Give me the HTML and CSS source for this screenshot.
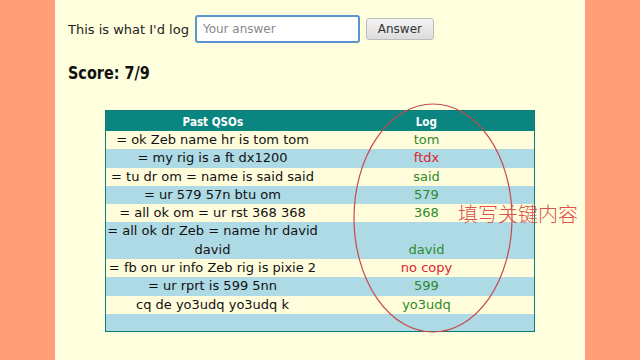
FILE: index.html
```html
<!DOCTYPE html>
<html lang="en">
<head>
    <meta charset="UTF-8">
    <meta name="viewport" content="width=device-width, initial-scale=1.0">
    <title>Copy practice</title>
    <link rel="stylesheet" href="styles.css">
</head>
<body>
    <div class="page">
        <form class="answer-row">
            <label for="answer">This is what I'd log</label>
            <input type="text" id="answer" name="answer" placeholder="Your answer">
            <button type="submit">Answer</button>
        </form>
        <h2 class="score"><span class="narrow">Score: 7/9</span></h2>
        <table class="qsos">
            <thead>
                <tr><th><span class="narrow">Past QSOs</span></th><th><span class="narrow">Log</span></th></tr>
            </thead>
            <tbody>
                <tr><td>= ok Zeb name hr is tom tom</td><td class="ok">tom</td></tr>
                <tr><td>= my rig is a ft dx1200</td><td class="bad">ftdx</td></tr>
                <tr><td>= tu dr om = name is said said</td><td class="ok">said</td></tr>
                <tr><td>= ur 579 57n btu om</td><td class="ok">579</td></tr>
                <tr><td>= all ok om = ur rst 368 368</td><td class="ok">368</td></tr>
                <tr><td>= all ok dr Zeb = name hr david david</td><td class="ok">david</td></tr>
                <tr><td>= fb on ur info Zeb rig is pixie 2</td><td class="bad">no copy</td></tr>
                <tr><td>= ur rprt is 599 5nn</td><td class="ok">599</td></tr>
                <tr><td>cq de yo3udq yo3udq k</td><td class="ok">yo3udq</td></tr>
                <tr class="empty"><td></td><td></td></tr>
            </tbody>
        </table>

        <!-- 标注 -->
        <svg class="mark" width="164" height="234" viewBox="0 0 164 234">
            <ellipse cx="82" cy="117" rx="79" ry="114" fill="none" stroke="#c8484c" stroke-width="1.2"/>
        </svg>
        <div class="note">填写关键内容</div>
    </div>
</body>
</html>
```

FILE: styles.css
```css
body {
    margin: 0;
    background-color: #FF9F7A;
    font-family: "DejaVu Sans", Verdana, sans-serif;
    font-size: 13px;
    color: #111;
}
.page {
    position: relative;
    width: 504px;
    min-height: 100vh;
    margin: 0 auto;
    padding: 15px 13px 0;
    background-color: #FFFFDD;
}
.answer-row {
    display: flex;
    align-items: center;
    gap: 6px;
    margin: 0;
}
.answer-row label {
    font-size: 13px;
    color: #222;
}
.answer-row input {
    box-sizing: border-box;
    width: 165px;
    height: 28px;
    padding: 2px 6px;
    border: 2px solid #5b95cf;
    border-radius: 3px;
    background: #fff;
    font-family: "DejaVu Sans", sans-serif;
    font-size: 12px;
}
.answer-row input::placeholder {
    color: #8a8a8a;
}
.answer-row button {
    width: 68px;
    height: 22px;
    border: 1px solid #bdbdbd;
    border-radius: 3px;
    background: linear-gradient(#f4f4f4, #dcdcdc);
    color: #333;
    font-family: "DejaVu Sans", sans-serif;
    font-size: 12px;
    cursor: pointer;
}
/* 窄体字 */
.narrow {
    display: inline-block;
    transform: scaleX(0.8);
}
.score {
    margin: 19px 0 27px;
    font-size: 18px;
    font-weight: bold;
    color: #111;
}
.score .narrow {
    transform-origin: left center;
}
.qsos {
    width: 430px;
    margin: 0 auto;
    border: 1px solid #0c7c78;
    border-collapse: collapse;
    text-align: center;
}
.qsos th {
    height: 20px;
    padding: 0;
    background-color: #0a8580;
    color: #fff;
    font-size: 13px;
    font-weight: bold;
}
.qsos th:first-child {
    width: 213px;
}
.qsos td {
    padding: 0;
    line-height: 18.3px;
    vertical-align: bottom;
}
.qsos tbody tr:nth-child(odd) {
    background-color: #FFFDDC;
}
.qsos tbody tr:nth-child(even) {
    background-color: #ADDAE4;
}
.qsos tr.empty td {
    height: 17px;
}
.ok {
    color: #2f8a2a;
}
.bad {
    color: #dc2430;
}
.mark {
    position: absolute;
    left: 296px;
    top: 101px;
}
.note {
    position: absolute;
    left: 403px;
    top: 204px;
    font-family: "Noto Sans CJK SC", sans-serif;
    font-size: 20px;
    line-height: 1;
    color: #d9534f;
    font-weight: 300;
}
```
